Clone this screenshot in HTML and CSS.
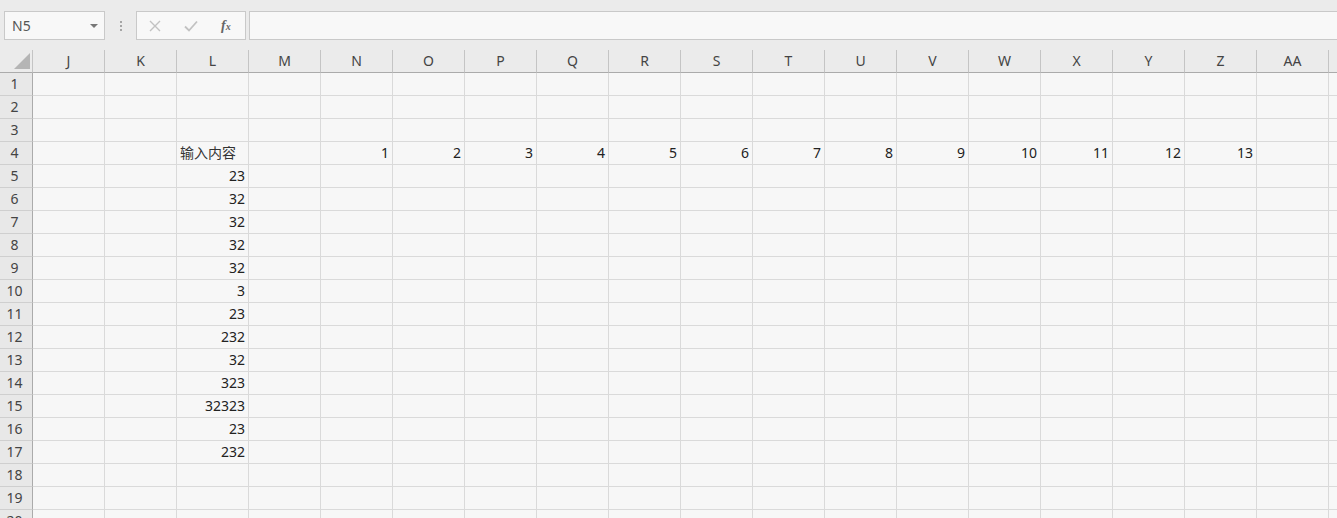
FILE: index.html
```html
<!DOCTYPE html>
<html lang="zh">
<head>
<meta charset="utf-8">
<title>Sheet</title>
<link rel="stylesheet" href="styles.css">
</head>
<body>
<div class="topbar">
  <div class="namebox"><span class="ref">N5</span><span class="caret"></span></div>
  <div class="grip"><i></i><i></i><i></i></div>
  <div class="fxbtns">
    <svg class="ico cancel" width="14" height="14" viewBox="0 0 14 14"><path d="M2 2 L12 12 M12 2 L2 12" stroke="#c2c2c2" stroke-width="1.4" fill="none"/></svg>
    <svg class="ico enter" width="16" height="14" viewBox="0 0 16 14"><path d="M2 7.5 L6 11.5 L14 2.5" stroke="#c2c2c2" stroke-width="1.8" fill="none"/></svg>
    <span class="fx">f<sub>x</sub></span>
  </div>
  <div class="formula"></div>
</div>
<div class="sheet">
  <div class="row head">
    <div class="corner"><span class="tri"></span></div>
    <div class="ch">J</div><div class="ch">K</div><div class="ch">L</div><div class="ch">M</div><div class="ch">N</div><div class="ch">O</div><div class="ch">P</div><div class="ch">Q</div><div class="ch">R</div><div class="ch">S</div><div class="ch">T</div><div class="ch">U</div><div class="ch">V</div><div class="ch">W</div><div class="ch">X</div><div class="ch">Y</div><div class="ch">Z</div><div class="ch">AA</div><div class="ch"></div>
  </div>
  <div class="row"><div class="rh">1</div><div class="c"></div><div class="c"></div><div class="c"></div><div class="c"></div><div class="c"></div><div class="c"></div><div class="c"></div><div class="c"></div><div class="c"></div><div class="c"></div><div class="c"></div><div class="c"></div><div class="c"></div><div class="c"></div><div class="c"></div><div class="c"></div><div class="c"></div><div class="c"></div><div class="c"></div></div>
  <div class="row"><div class="rh">2</div><div class="c"></div><div class="c"></div><div class="c"></div><div class="c"></div><div class="c"></div><div class="c"></div><div class="c"></div><div class="c"></div><div class="c"></div><div class="c"></div><div class="c"></div><div class="c"></div><div class="c"></div><div class="c"></div><div class="c"></div><div class="c"></div><div class="c"></div><div class="c"></div><div class="c"></div></div>
  <div class="row"><div class="rh">3</div><div class="c"></div><div class="c"></div><div class="c"></div><div class="c"></div><div class="c"></div><div class="c"></div><div class="c"></div><div class="c"></div><div class="c"></div><div class="c"></div><div class="c"></div><div class="c"></div><div class="c"></div><div class="c"></div><div class="c"></div><div class="c"></div><div class="c"></div><div class="c"></div><div class="c"></div></div>
  <div class="row"><div class="rh">4</div><div class="c"></div><div class="c"></div><div class="c txt">输入内容</div><div class="c"></div><div class="c n">1</div><div class="c n">2</div><div class="c n">3</div><div class="c n">4</div><div class="c n">5</div><div class="c n">6</div><div class="c n">7</div><div class="c n">8</div><div class="c n">9</div><div class="c n">10</div><div class="c n">11</div><div class="c n">12</div><div class="c n">13</div><div class="c"></div><div class="c"></div></div>
  <div class="row"><div class="rh">5</div><div class="c"></div><div class="c"></div><div class="c n">23</div><div class="c"></div><div class="c"></div><div class="c"></div><div class="c"></div><div class="c"></div><div class="c"></div><div class="c"></div><div class="c"></div><div class="c"></div><div class="c"></div><div class="c"></div><div class="c"></div><div class="c"></div><div class="c"></div><div class="c"></div><div class="c"></div></div>
  <div class="row"><div class="rh">6</div><div class="c"></div><div class="c"></div><div class="c n">32</div><div class="c"></div><div class="c"></div><div class="c"></div><div class="c"></div><div class="c"></div><div class="c"></div><div class="c"></div><div class="c"></div><div class="c"></div><div class="c"></div><div class="c"></div><div class="c"></div><div class="c"></div><div class="c"></div><div class="c"></div><div class="c"></div></div>
  <div class="row"><div class="rh">7</div><div class="c"></div><div class="c"></div><div class="c n">32</div><div class="c"></div><div class="c"></div><div class="c"></div><div class="c"></div><div class="c"></div><div class="c"></div><div class="c"></div><div class="c"></div><div class="c"></div><div class="c"></div><div class="c"></div><div class="c"></div><div class="c"></div><div class="c"></div><div class="c"></div><div class="c"></div></div>
  <div class="row"><div class="rh">8</div><div class="c"></div><div class="c"></div><div class="c n">32</div><div class="c"></div><div class="c"></div><div class="c"></div><div class="c"></div><div class="c"></div><div class="c"></div><div class="c"></div><div class="c"></div><div class="c"></div><div class="c"></div><div class="c"></div><div class="c"></div><div class="c"></div><div class="c"></div><div class="c"></div><div class="c"></div></div>
  <div class="row"><div class="rh">9</div><div class="c"></div><div class="c"></div><div class="c n">32</div><div class="c"></div><div class="c"></div><div class="c"></div><div class="c"></div><div class="c"></div><div class="c"></div><div class="c"></div><div class="c"></div><div class="c"></div><div class="c"></div><div class="c"></div><div class="c"></div><div class="c"></div><div class="c"></div><div class="c"></div><div class="c"></div></div>
  <div class="row"><div class="rh">10</div><div class="c"></div><div class="c"></div><div class="c n">3</div><div class="c"></div><div class="c"></div><div class="c"></div><div class="c"></div><div class="c"></div><div class="c"></div><div class="c"></div><div class="c"></div><div class="c"></div><div class="c"></div><div class="c"></div><div class="c"></div><div class="c"></div><div class="c"></div><div class="c"></div><div class="c"></div></div>
  <div class="row"><div class="rh">11</div><div class="c"></div><div class="c"></div><div class="c n">23</div><div class="c"></div><div class="c"></div><div class="c"></div><div class="c"></div><div class="c"></div><div class="c"></div><div class="c"></div><div class="c"></div><div class="c"></div><div class="c"></div><div class="c"></div><div class="c"></div><div class="c"></div><div class="c"></div><div class="c"></div><div class="c"></div></div>
  <div class="row"><div class="rh">12</div><div class="c"></div><div class="c"></div><div class="c n">232</div><div class="c"></div><div class="c"></div><div class="c"></div><div class="c"></div><div class="c"></div><div class="c"></div><div class="c"></div><div class="c"></div><div class="c"></div><div class="c"></div><div class="c"></div><div class="c"></div><div class="c"></div><div class="c"></div><div class="c"></div><div class="c"></div></div>
  <div class="row"><div class="rh">13</div><div class="c"></div><div class="c"></div><div class="c n">32</div><div class="c"></div><div class="c"></div><div class="c"></div><div class="c"></div><div class="c"></div><div class="c"></div><div class="c"></div><div class="c"></div><div class="c"></div><div class="c"></div><div class="c"></div><div class="c"></div><div class="c"></div><div class="c"></div><div class="c"></div><div class="c"></div></div>
  <div class="row"><div class="rh">14</div><div class="c"></div><div class="c"></div><div class="c n">323</div><div class="c"></div><div class="c"></div><div class="c"></div><div class="c"></div><div class="c"></div><div class="c"></div><div class="c"></div><div class="c"></div><div class="c"></div><div class="c"></div><div class="c"></div><div class="c"></div><div class="c"></div><div class="c"></div><div class="c"></div><div class="c"></div></div>
  <div class="row"><div class="rh">15</div><div class="c"></div><div class="c"></div><div class="c n">32323</div><div class="c"></div><div class="c"></div><div class="c"></div><div class="c"></div><div class="c"></div><div class="c"></div><div class="c"></div><div class="c"></div><div class="c"></div><div class="c"></div><div class="c"></div><div class="c"></div><div class="c"></div><div class="c"></div><div class="c"></div><div class="c"></div></div>
  <div class="row"><div class="rh">16</div><div class="c"></div><div class="c"></div><div class="c n">23</div><div class="c"></div><div class="c"></div><div class="c"></div><div class="c"></div><div class="c"></div><div class="c"></div><div class="c"></div><div class="c"></div><div class="c"></div><div class="c"></div><div class="c"></div><div class="c"></div><div class="c"></div><div class="c"></div><div class="c"></div><div class="c"></div></div>
  <div class="row"><div class="rh">17</div><div class="c"></div><div class="c"></div><div class="c n">232</div><div class="c"></div><div class="c"></div><div class="c"></div><div class="c"></div><div class="c"></div><div class="c"></div><div class="c"></div><div class="c"></div><div class="c"></div><div class="c"></div><div class="c"></div><div class="c"></div><div class="c"></div><div class="c"></div><div class="c"></div><div class="c"></div></div>
  <div class="row"><div class="rh">18</div><div class="c"></div><div class="c"></div><div class="c"></div><div class="c"></div><div class="c"></div><div class="c"></div><div class="c"></div><div class="c"></div><div class="c"></div><div class="c"></div><div class="c"></div><div class="c"></div><div class="c"></div><div class="c"></div><div class="c"></div><div class="c"></div><div class="c"></div><div class="c"></div><div class="c"></div></div>
  <div class="row"><div class="rh">19</div><div class="c"></div><div class="c"></div><div class="c"></div><div class="c"></div><div class="c"></div><div class="c"></div><div class="c"></div><div class="c"></div><div class="c"></div><div class="c"></div><div class="c"></div><div class="c"></div><div class="c"></div><div class="c"></div><div class="c"></div><div class="c"></div><div class="c"></div><div class="c"></div><div class="c"></div></div>
  <div class="row"><div class="rh">20</div><div class="c"></div><div class="c"></div><div class="c"></div><div class="c"></div><div class="c"></div><div class="c"></div><div class="c"></div><div class="c"></div><div class="c"></div><div class="c"></div><div class="c"></div><div class="c"></div><div class="c"></div><div class="c"></div><div class="c"></div><div class="c"></div><div class="c"></div><div class="c"></div><div class="c"></div></div>
</div>
</body>
</html>
```
FILE: styles.css
```css
html, body {
  margin: 0;
  padding: 0;
  width: 1337px;
  height: 518px;
  overflow: hidden;
  background: #ebebeb;
  font-family: "Noto Sans", "Noto Sans CJK SC", sans-serif;
  font-size: 14px;
  color: #222;
}

.topbar {
  display: flex;
  align-items: stretch;
  height: 29px;
  padding: 11px 0 10px 4px;
  border-top: 1px solid #dcdcdc;
  margin-top: -1px;
}

.namebox {
  width: 101px;
  box-sizing: border-box;
  background: #f8f8f8;
  border: 1px solid #c9c9c9;
  display: flex;
  align-items: center;
  justify-content: space-between;
  padding: 0 6px 0 7px;
  color: #555;
  font-size: 14px;
}

.caret {
  width: 0;
  height: 0;
  border-left: 4px solid transparent;
  border-right: 4px solid transparent;
  border-top: 4px solid #777;
}

.grip {
  width: 31px;
  display: flex;
  flex-direction: column;
  align-items: center;
  justify-content: center;
  gap: 2px;
}
.grip i {
  display: block;
  width: 2px;
  height: 2px;
  background: #a5a5a5;
}

.fxbtns {
  width: 110px;
  box-sizing: border-box;
  background: #f8f8f8;
  border: 1px solid #c9c9c9;
  display: flex;
  align-items: center;
  padding: 0 0 0 11px;
}
.enter {
  margin-left: 21px;
}
.fx {
  font-family: "Liberation Serif", "DejaVu Serif", serif;
  font-style: italic;
  font-weight: bold;
  color: #666;
  font-size: 14px;
  margin-left: 22px;
}
.fx sub {
  font-size: 10px;
  vertical-align: baseline;
}

.formula {
  flex: 1;
  margin-left: 3px;
  background: #f8f8f8;
  border: 1px solid #c9c9c9;
  border-right: none;
}

.sheet {
  width: 1337px;
  overflow: hidden;
}

.row {
  display: grid;
  grid-template-columns: 33px repeat(19, 72px);
  height: 23px;
}

.corner {
  box-sizing: border-box;
  border-right: 1px solid #c4c4c4;
  border-bottom: 1px solid #ababab;
  position: relative;
}
.tri {
  position: absolute;
  right: 2px;
  bottom: 3px;
  width: 0;
  height: 0;
  border-left: 16px solid transparent;
  border-bottom: 16px solid #b5b5b5;
}

.ch {
  box-sizing: border-box;
  border-right: 1px solid #c4c4c4;
  border-bottom: 1px solid #ababab;
  text-align: center;
  line-height: 21px;
  color: #444;
  font-size: 14px;
}

.rh {
  box-sizing: border-box;
  background: #e8e8e8;
  border-right: 1px solid #ababab;
  border-bottom: 1px solid #cfcfcf;
  text-align: center;
  padding-right: 3px;
  line-height: 22px;
  color: #444;
  font-size: 14px;
}

.c {
  box-sizing: border-box;
  background: #f7f7f7;
  border-right: 1px solid #dadada;
  border-bottom: 1px solid #dadada;
  line-height: 22px;
  padding: 0 3px;
  white-space: nowrap;
  color: #222;
}
.n {
  text-align: right;
}
.txt {
  text-align: left;
  color: #333;
}
```
